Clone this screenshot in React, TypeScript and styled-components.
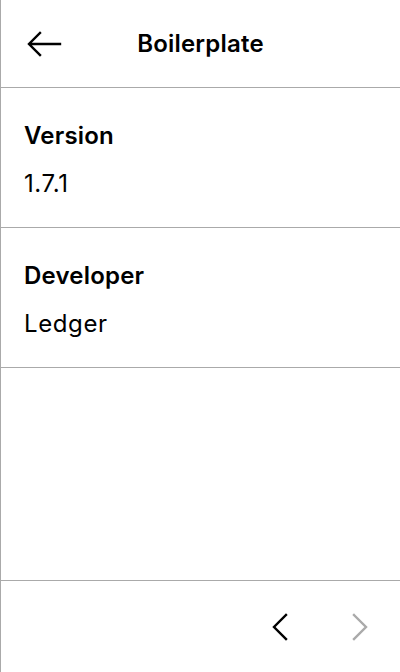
import React from "react";
import styled, { createGlobalStyle } from "styled-components";

interface IInfo {
  label: string;
  value: string;
}

const infos: IInfo[] = [
  { label: "Version", value: "1.7.1" },
  { label: "Developer", value: "Ledger" }
];

const GlobalStyle = createGlobalStyle`
  html, body {
    margin: 0;
    padding: 0;
    background: #fff;
  }
  * {
    box-sizing: border-box;
  }
`;

const Screen = styled.div`
  width: 400px;
  height: 672px;
  display: flex;
  flex-direction: column;
  border-left: 1px solid #aaaaaa;
  font-family: Inter, "Noto Sans", sans-serif;
  color: #000;
  background: #fff;
`;

const Header = styled.div`
  height: 88px;
  flex-shrink: 0;
  display: grid;
  grid-template-columns: 88px 1fr 88px;
  align-items: center;
  border-bottom: 1px solid #aaaaaa;
`;

const BackButton = styled.button`
  border: none;
  background: none;
  padding: 0 0 0 25px;
  height: 100%;
  display: flex;
  align-items: center;
  cursor: pointer;
`;

const Title = styled.h1`
  margin: 0;
  font-size: 24px;
  font-weight: 600;
  text-align: center;
  letter-spacing: 0.2px;
`;

const InfoRow = styled.div`
  height: 140px;
  flex-shrink: 0;
  padding: 32px 24px 0 23px;
  border-bottom: 1px solid #aaaaaa;
`;

const Label = styled.div`
  font-size: 24px;
  font-weight: 600;
  line-height: 32px;
  letter-spacing: 0.2px;
`;

const Value = styled.div`
  margin-top: 16px;
  font-size: 24px;
  font-weight: 400;
  line-height: 32px;
  letter-spacing: 0.6px;
`;

const Spacer = styled.div`
  flex: 1;
`;

const Footer = styled.div`
  height: 92px;
  flex-shrink: 0;
  display: flex;
  justify-content: flex-end;
  align-items: center;
  border-top: 1px solid #aaaaaa;
`;

const NavButton = styled.button<{ disabled?: boolean }>`
  width: 80px;
  height: 100%;
  border: none;
  background: none;
  padding: 0;
  display: flex;
  align-items: center;
  justify-content: center;
  color: ${props => (props.disabled ? "#aaaaaa" : "#000")};
`;

const ArrowLeft = () => (
  <svg width="36" height="28" viewBox="0 0 36 28" fill="none">
    <path
      d="M34 14H4M14 3L3 14L14 25"
      stroke="#000"
      strokeWidth="2.4"
      strokeLinecap="square"
    />
  </svg>
);

const Chevron: React.FC<{ dir: "left" | "right" }> = ({ dir }) => (
  <svg width="24" height="30" viewBox="0 0 24 30" fill="none">
    <path
      d={dir === "left" ? "M18 3L6 15L18 27" : "M6 3L18 15L6 27"}
      stroke="currentColor"
      strokeWidth="2.4"
      strokeLinecap="square"
    />
  </svg>
);

const App: React.FC = () => {
  return (
    <>
      <GlobalStyle />
      <Screen>
        <Header>
          <BackButton aria-label="Back">
            <ArrowLeft />
          </BackButton>
          <Title>Boilerplate</Title>
          <div />
        </Header>
        {infos.map(info => (
          <InfoRow key={info.label}>
            <Label>{info.label}</Label>
            <Value>{info.value}</Value>
          </InfoRow>
        ))}
        <Spacer />
        <Footer>
          <NavButton aria-label="Previous">
            <Chevron dir="left" />
          </NavButton>
          <NavButton aria-label="Next" disabled>
            <Chevron dir="right" />
          </NavButton>
        </Footer>
      </Screen>
    </>
  );
};

export default App;
